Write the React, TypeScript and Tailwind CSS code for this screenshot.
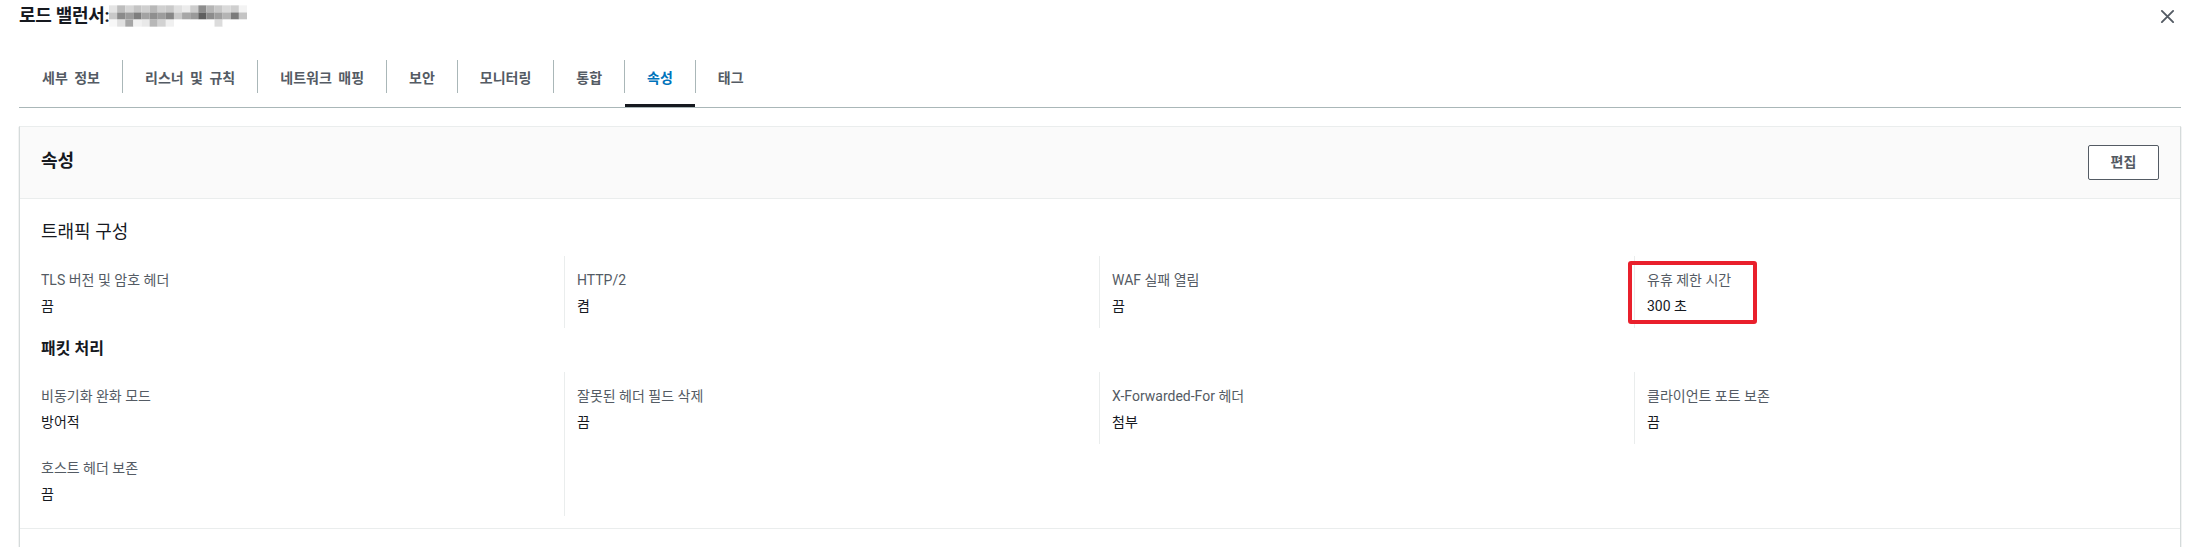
import React from "react";

const TABS = ["세부 정보", "리스너 및 규칙", "네트워크 매핑", "보안", "모니터링", "통합", "속성", "태그"];

const BLUR: string[][] = [
  ["#e4e4e4", "#bdbdbd", "#d6d6d6", "#c4c4c4", "#cfcfcf", "#b8b8b8", "#d0d0d0", "#c9c9c9", "#e0e0e0", "#ececec", "#cdcdcd", "#8d8d8d", "#b5b5b5", "#c8c8c8", "#dadada", "#cfcfcf", "#f3f3f3"],
  ["#c8c8c8", "#8a8a8a", "#9b9b9b", "#7e7e7e", "#a3a3a3", "#8f8f8f", "#9d9d9d", "#878787", "#c9c9c9", "#a7a7a7", "#9a9a9a", "#5f5f5f", "#8c8c8c", "#9e9e9e", "#b4b4b4", "#7b7b7b", "#c4c4c4"],
  ["#f7f7f7", "#e0e0e0", "#a6a6a6", "#f1f1f1", "#e9e9e9", "#b7b7b7", "#d2d2d2", "#f0f0f0", "#ffffff", "#ffffff", "#ffffff", "#ffffff", "#ffffff", "#dcdcdc", "#ffffff", "#ffffff", "#ffffff"],
];

function Blur() {
  return (
    <svg width="138" height="22" viewBox="0 0 136 21" className="block">
      {BLUR.map((row, r) =>
        row.map((c, i) => <rect key={`${r}-${i}`} x={i * 8} y={r * 7} width="8" height="7" fill={c} />)
      )}
    </svg>
  );
}

type Item = { label: string; value: string; highlight?: boolean } | null;

function Cell({ item, border }: { item: Item; border: boolean }) {
  return (
    <div className={`relative pl-[12px] pr-[12px] pt-[13px] pb-[11px] ${border ? "border-l border-[#eaeded]" : ""}`}>
      {item && (
        <>
          <div className="text-[14px] leading-[22px] text-[#545b64]">{item.label}</div>
          <div className="mt-[4px] text-[14px] leading-[22px] text-[#16191f]">{item.value}</div>
          {item.highlight && (
            <div className="pointer-events-none absolute left-[-7px] top-[5px] h-[63px] w-[129px] rounded-[3px] border-[4px] border-[#e9202c]" />
          )}
        </>
      )}
    </div>
  );
}

export default function App() {
  const traffic: Item[] = [
    { label: "TLS 버전 및 암호 헤더", value: "끔" },
    { label: "HTTP/2", value: "켬" },
    { label: "WAF 실패 열림", value: "끔" },
    { label: "유휴 제한 시간", value: "300 초", highlight: true },
  ];
  const packet1: Item[] = [
    { label: "비동기화 완화 모드", value: "방어적" },
    { label: "잘못된 헤더 필드 삭제", value: "끔" },
    { label: "X-Forwarded-For 헤더", value: "첨부" },
    { label: "클라이언트 포트 보존", value: "끔" },
  ];

  return (
    <div className="min-h-screen bg-white pl-[19px] pr-[8px] font-[Roboto,'Noto_Sans_CJK_KR',sans-serif] text-[#16191f]">
      {/* Title row */}
      <div className="flex h-[31px] items-center justify-between pt-[1px]">
        <div className="flex items-center">
          <h1 className="text-[18px] font-bold leading-[22px] tracking-[-0.3px] text-[#16191f]">로드 밸런서:</h1>
          <Blur />
        </div>
        <button className="mr-[6px] mt-[1px] text-[#545b64]" aria-label="닫기">
          <svg width="15" height="15" viewBox="0 0 16 16" fill="none" stroke="currentColor" strokeWidth="2" strokeLinecap="round">
            <path d="M2 2L14 14M14 2L2 14" />
          </svg>
        </button>
      </div>

      {/* Tabs */}
      <div className="mt-[21px] flex border-b border-[#aab7b8]">
        {TABS.map((t, i) => {
          const active = t === "속성";
          return (
            <div key={t} className="relative pt-[8px] pb-[14px]">
              <div
                className={`flex h-[33px] items-center pt-[2px] [word-spacing:3px] ${i === 0 ? "pl-[23px]" : "border-l border-[#aab7b8] pl-[22px]"} pr-[22px] text-[14px] font-bold leading-[20px] ${
                  active ? "text-[#0073bb]" : "text-[#545b64]"
                }`}
              >
                {t}
              </div>
              {active && <div className="absolute bottom-0 left-[1px] right-0 h-[3px] bg-[#16191f]" />}
            </div>
          );
        })}
      </div>

      {/* Card */}
      <div className="mt-[18px] border-x border-t border-x-[#d5dbdb] border-t-[#eaeded] bg-white shadow-[0_1px_1px_0_rgba(0,28,36,0.3)]">
        <div className="flex h-[72px] items-center justify-between border-b border-[#eaeded] bg-[#fafafa] pl-[21px] pr-[21px]">
          <h2 className="pb-[3px] text-[18px] font-bold leading-[22px] text-[#16191f]">속성</h2>
          <button className="h-[35px] w-[71px] rounded-[2px] border border-[#545b64] bg-white text-[14px] font-bold text-[#545b64]">
            편집
          </button>
        </div>

        <div className="border-b border-[#eaeded] pl-[21px] pr-[21px] pt-[20px] pb-[12px]">
          <h3 className="text-[18px] font-normal leading-[26px] text-[#16191f]">트래픽 구성</h3>
          <div className="-ml-[12px] -mr-[10px] mt-[11px] grid grid-cols-4">
            {traffic.map((it, i) => (
              <Cell key={i} item={it} border={i > 0} />
            ))}
          </div>

          <h3 className="mt-[10px] text-[16px] font-bold leading-[22px] text-[#16191f]">패킷 처리</h3>
          <div className="-ml-[12px] -mr-[10px] mt-[12px] grid grid-cols-4">
            {packet1.map((it, i) => (
              <Cell key={i} item={it} border={i > 0} />
            ))}
            <Cell item={{ label: "호스트 헤더 보존", value: "끔" }} border={false} />
            <Cell item={null} border={true} />
            <div />
            <div />
          </div>
        </div>
        <div className="h-[40px]" />
      </div>
    </div>
  );
}
